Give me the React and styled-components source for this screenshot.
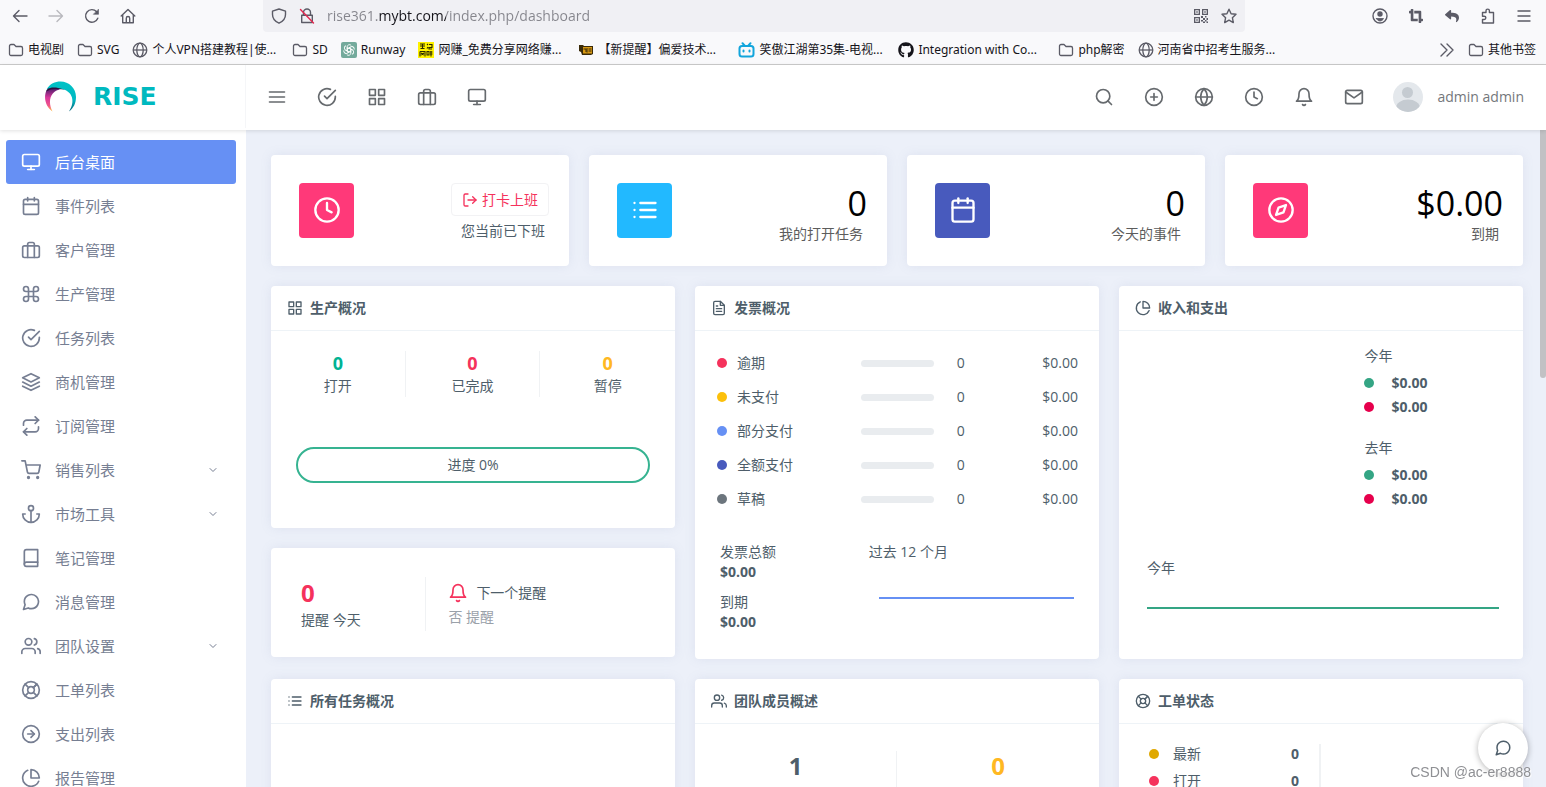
import React from "react";
import styled, { createGlobalStyle } from "styled-components";
import {
  FiAnchor,
  FiArrowRightCircle,
  FiBell,
  FiBook,
  FiBriefcase,
  FiCalendar,
  FiCheckCircle,
  FiChevronDown,
  FiClock,
  FiCommand,
  FiCompass,
  FiFileText,
  FiGlobe,
  FiGrid,
  FiLayers,
  FiLifeBuoy,
  FiList,
  FiLogOut,
  FiMail,
  FiMenu,
  FiMessageCircle,
  FiMonitor,
  FiPieChart,
  FiPlusCircle,
  FiRepeat,
  FiSearch,
  FiShoppingCart,
  FiUsers,
} from "react-icons/fi";
import { FaCropAlt, FaGithub, FaReply } from "react-icons/fa";

const GlobalStyle = createGlobalStyle`
  * {
    box-sizing: border-box;
  }

  body {
    margin: 0;
    color: #4e5e6a;
    background: #ecf0f9;
    font-family: "Open Sans", "Noto Sans CJK SC", sans-serif;
    font-size: 14px;
    line-height: 20px;
  }

  a {
    color: inherit;
    text-decoration: none;
  }

  button {
    padding: 0;
    border: none;
    background: none;
    color: inherit;
    font: inherit;
    cursor: pointer;
  }

  svg {
    display: block;
    flex-shrink: 0;
  }

  ul {
    margin: 0;
    padding: 0;
    list-style: none;
  }
`;

/* ---------- browser bars ---------- */

const Page = styled.div`
  display: flex;
  flex-direction: column;
  height: 100vh;
  overflow: hidden;
`;

const Browser = styled.div`
  flex-shrink: 0;
  background: #f9f9fb;
  border-bottom: 1px solid #cccccc;
  color: #15141a;
  font-family: "Noto Sans", "Noto Sans CJK SC", sans-serif;
`;

const Toolbar = styled.div`
  display: flex;
  align-items: center;
  height: 32px;
  padding: 0 4px 0 2px;
`;

const ToolButton = styled.button`
  display: flex;
  justify-content: center;
  width: 36px;
  color: ${({ $dim }) => ($dim ? "#b9b9be" : "#5b5b66")};
`;

const AddressBar = styled.div`
  display: flex;
  align-items: center;
  flex: 1;
  gap: 12px;
  height: 32px;
  margin: 0 117px;
  padding: 0 8px;
  border-radius: 0 0 4px 4px;
  background: #f0f0f4;
  color: #5b5b66;
`;

const AddressInput = styled.input`
  flex: 1;
  min-width: 0;
  padding: 0;
  border: none;
  outline: none;
  font-family: "Open Sans", sans-serif;
  font-size: 14px;
  line-height: 20px;
  color: transparent;
  background: linear-gradient(
    to right,
    #85858c 52px,
    #15141a 52px,
    #15141a 119px,
    #85858c 119px
  );
  -webkit-background-clip: text;
  background-clip: text;
`;

const Bookmarks = styled.nav`
  display: flex;
  gap: 13px;
  height: 32px;
  padding: 4px 10px 0 8px;
  font-size: 12px;
`;

const Bookmark = styled.a`
  display: flex;
  align-items: center;
  gap: 4px;
  width: ${({ $long }) => ($long ? "147px" : "auto")};
  white-space: nowrap;
`;

const MoreBookmarks = styled.button`
  margin-left: auto;
  color: #5b5b66;
`;

/* ---------- app header ---------- */

const Header = styled.header`
  position: relative;
  z-index: 2;
  display: flex;
  align-items: center;
  flex-shrink: 0;
  height: 65px;
  padding: 0 22px 2px 0;
  background: #ffffff;
  box-shadow: 0 1px 4px rgba(0, 0, 0, 0.12);
`;

const Brand = styled.a`
  display: flex;
  align-items: center;
  gap: 15px;
  width: 246px;
  height: 63px;
  padding-left: 44px;
  border-right: 1px solid #f5f6f8;
  color: #00b9bf;
  font-family: "DejaVu Sans", sans-serif;
  font-size: 25px;
  font-weight: 700;
`;

const HeaderIcons = styled.div`
  display: flex;
  margin: ${({ $right }) => ($right ? "0 14px 0 auto" : "0 0 0 6px")};
`;

const HeaderButton = styled.button`
  display: flex;
  justify-content: center;
  width: 50px;
  color: #666a6e;
`;

const User = styled.a`
  display: flex;
  align-items: center;
  gap: 15px;
  color: #74777b;
  font-size: 14px;
`;

/* ---------- layout ---------- */

const Body = styled.div`
  display: flex;
  flex: 1;
  min-height: 0;
`;

const Sidebar = styled.nav`
  flex-shrink: 0;
  width: 246px;
  padding: 10px 10px 0 6px;
  overflow: hidden;
  background: #ffffff;
`;

const SideLink = styled.a`
  display: flex;
  align-items: center;
  gap: 14px;
  height: 44px;
  padding: 0 17px 0 15px;
  border-radius: 3px;
  color: ${({ $active }) => ($active ? "#ffffff" : "#767e92")};
  background: ${({ $active }) => ($active ? "#6690f4" : "transparent")};
  font-size: 15px;

  span {
    flex: 1;
  }
`;

const Content = styled.main`
  display: flex;
  flex-direction: column;
  flex: 1;
  gap: 20px;
  min-width: 0;
  padding: 25px 17px 0 25px;
  overflow: hidden;
`;

const ScrollTrack = styled.div`
  flex-shrink: 0;
  width: 6px;
`;

const ScrollThumb = styled.div`
  height: 248px;
  border-radius: 0 0 3px 3px;
  background: #c1c1c4;
`;

const Row = styled.div`
  display: grid;
  grid-template-columns: repeat(${({ $cols }) => $cols}, 1fr);
  flex-shrink: 0;
  gap: 20px;
`;

const Column = styled.div`
  display: flex;
  flex-direction: column;
  gap: 20px;
`;

const Card = styled.section`
  min-height: ${({ $tall }) => ($tall ? "240px" : "0")};
  border-radius: 4px;
  background: #ffffff;
  box-shadow: 0 0 12px rgba(120, 130, 170, 0.12);
`;

const CardTitle = styled.h2`
  display: flex;
  align-items: center;
  gap: 7px;
  height: 45px;
  margin: 0;
  padding: 0 16px;
  border-bottom: 1px solid #eef3f7;
  font-size: 14px;
  font-weight: 700;
`;

const StatCard = styled(Card)`
  display: flex;
  justify-content: space-between;
  padding: 28px 20px 20px 28px;
`;

const StatIcon = styled.div`
  display: flex;
  align-items: center;
  justify-content: center;
  width: 55px;
  height: 55px;
  padding-bottom: 2px;
  border-radius: 4px;
  background: ${({ $color }) => $color};
  color: #ffffff;
`;

const StatText = styled.div`
  display: flex;
  flex-direction: column;
  align-items: flex-end;
`;

const StatValue = styled.div`
  color: #000000;
  font-size: 34px;
  line-height: 40px;
`;

const StatLabel = styled.div`
  padding-right: 4px;
  color: ${({ $clock }) => ($clock ? "#4e5e6a" : "#5c5c5c")};
  line-height: ${({ $clock }) => ($clock ? "30px" : "22px")};
`;

const ClockButton = styled.button`
  display: flex;
  align-items: center;
  gap: 4px;
  height: 33px;
  padding: 0 10px;
  border: 1px solid #f2f2f4;
  border-radius: 4px;
  color: #f5325c;
`;

/* ---------- projects ---------- */

const Counts = styled.div`
  display: grid;
  grid-template-columns: repeat(3, 1fr);
  padding-top: 20px;
`;

const Count = styled.div`
  border-right: 1px solid #f0f2f4;
  text-align: center;
  line-height: 22px;

  &:last-child {
    border-right: none;
  }

  strong {
    display: block;
    color: ${({ $color }) => $color};
    font-size: 18px;
    line-height: 24px;
  }
`;

const Progress = styled.div`
  margin: 50px 25px 45px;
  border: 2px solid #36b391;
  border-radius: 18px;
  text-align: center;
  line-height: 32px;
`;

const Reminder = styled(Card)`
  display: grid;
  grid-template-columns: 5fr 8fr;
  padding: 29px 0 26px;
`;

const ReminderCount = styled.div`
  padding-left: 30px;
  border-right: 1px solid #f0f2f4;
  line-height: 22px;

  strong {
    display: block;
    color: #f5325c;
    font-size: 24px;
    line-height: 32px;
  }
`;

const ReminderNext = styled.div`
  padding: 4px 0 0 22px;
  line-height: 24px;

  div {
    display: flex;
    align-items: center;
    gap: 8px;
  }

  small {
    display: block;
    color: #9aa1a9;
    font-size: 14px;
  }

  svg {
    color: #f5325c;
  }
`;

/* ---------- invoices ---------- */

const Dot = styled.i`
  display: inline-block;
  flex-shrink: 0;
  width: 10px;
  height: 10px;
  border-radius: 50%;
  background: ${({ $color }) => $color};
`;

const InvoiceBody = styled.div`
  padding: 15px 21px 0 22px;
`;

const InvoiceTable = styled.table`
  width: 100%;
  border-collapse: collapse;
  table-layout: fixed;

  td {
    height: 34px;
    padding: 0;
    text-align: center;
  }

  td:first-child {
    width: 40%;
    text-align: left;
  }

  td:nth-child(2) {
    width: 20%;
  }

  td:nth-child(3) {
    width: 15%;
  }

  td:last-child {
    text-align: right;
  }
`;

const Named = styled.span`
  display: flex;
  align-items: center;
  gap: 10px;
`;

const Track = styled.div`
  height: 7px;
  border-radius: 4px;
  background: #e9ecef;
`;

const InvoiceTotals = styled.div`
  display: grid;
  grid-template-columns: 42% 58%;
  padding: 26px 25px 26px;
`;

const Totals = styled.div`
  display: flex;
  flex-direction: column;
  gap: 10px;

  strong {
    display: block;
  }
`;

const Spark = styled.svg`
  width: 100%;
  height: ${({ $height }) => $height};
  padding-left: ${({ $indent }) => $indent || "0"};
`;

/* ---------- income, team, tickets ---------- */

const Years = styled.div`
  display: grid;
  grid-template-columns: 3fr 2fr;
  padding-top: 13px;
  line-height: 24px;
`;

const YearList = styled.div`
  display: flex;
  flex-direction: column;
  grid-column: 2;
  gap: 17px;
  padding-left: 3px;
`;

const YearRows = styled.ul`
  padding-top: 3px;

  li {
    display: flex;
    align-items: center;
    gap: 17px;
    font-weight: 700;
  }
`;

const ThisYear = styled.div`
  padding: 45px 24px 39px 28px;
  line-height: 24px;
`;

const Team = styled.div`
  display: grid;
  grid-template-columns: repeat(2, 1fr);
  padding-top: 27px;
`;

const TeamCount = styled.strong`
  height: 120px;
  border-right: ${({ $split }) => ($split ? "1px solid #f0f2f4" : "none")};
  color: ${({ $color }) => $color};
  font-size: 24px;
  line-height: 30px;
  text-align: center;
`;

const Tickets = styled.ul`
  display: flex;
  flex-direction: column;
  gap: 7px;
  width: 50%;
  height: 140px;
  margin-top: 20px;
  padding: 0 20px 0 30px;
  border-right: 2px solid #f0f2f4;

  li {
    display: flex;
    align-items: center;
    gap: 14px;
  }

  strong {
    margin-left: auto;
  }
`;

const ChatButton = styled.button`
  position: fixed;
  right: 18px;
  bottom: 14px;
  display: flex;
  align-items: center;
  justify-content: center;
  width: 50px;
  height: 50px;
  border-radius: 50%;
  background: #ffffff;
  box-shadow: 0 1px 6px rgba(0, 0, 0, 0.3);
`;

const Watermark = styled.div`
  position: fixed;
  right: 15px;
  bottom: 5px;
  z-index: 3;
  color: #8f9094;
  font-family: "Liberation Sans", sans-serif;
  font-size: 14px;
  text-shadow: 1px 1px 1px #ffffff;
`;

/* ---------- drawings ---------- */

const Line = ({ size = 16, width = 1.4, children }) => (
  <svg
    width={size}
    height={size}
    viewBox="0 0 16 16"
    fill="none"
    stroke="currentColor"
    strokeWidth={width}
    strokeLinecap="round"
    strokeLinejoin="round"
  >
    {children}
  </svg>
);

const BackIcon = () => (
  <Line>
    <path d="M15 8H1.5M7 2.5L1.5 8L7 13.5" />
  </Line>
);

const ForwardIcon = () => (
  <Line>
    <path d="M1 8H14.500M9 2.5L14.500 8L9 13.500" />
  </Line>
);

const ReloadIcon = () => (
  <Line>
    <path d="M13.800 10.200A6.300 6.300 0 1 1 12.600 3.700" />
    <path d="M14.500 1.500V6.300H9.700Z" fill="currentColor" strokeWidth="0.6" />
  </Line>
);

const HomeIcon = () => (
  <Line>
    <path d="M1.200 8L8 1.500L14.800 8M2.700 7V14.800H13.300V7M6.300 14.500V10.200A1.700 1.700 0 0 1 9.700 10.200V14.500" />
  </Line>
);

const ShieldIcon = () => (
  <Line>
    <path d="M8 1L14.500 3.200V6.500C14.500 10.500 11.500 13.700 8 15.200C4.500 13.700 1.500 10.500 1.500 6.500V3.200Z" />
  </Line>
);

const InsecureIcon = () => (
  <Line>
    <path d="M4.500 7V4.500A3.500 3.500 0 0 1 11.500 4.500V7M2.700 7.200H13.300V14.500H2.700Z" />
    <path d="M1.500 1.500L14.500 15" stroke="#e22850" />
  </Line>
);

const QrIcon = () => (
  <svg width="16" height="16" viewBox="0 0 16 16" fill="#5b5b66" fillRule="evenodd">
    <path d="M1 1H7V7H1ZM2.300 2.300V5.700H5.700V2.300ZM3.300 3.300H4.700V4.700H3.300ZM9 1H15V7H9ZM10.300 2.300V5.700H13.700V2.300ZM11.300 3.300H12.700V4.700H11.300ZM1 9H7V15H1ZM2.300 10.300V13.700H5.700V10.300ZM3.300 11.300H4.700V12.700H3.300Z" />
    <path d="M8 8H10V10H8ZM12 8H13.500V9.500H12ZM10 10H12V12H10ZM13.500 10H15V12H13.500ZM8 12H10V13.500H8ZM12 12H13.500V13.500H12ZM10 13.500H12V15H10ZM13.500 13.500H15V15H13.500Z" />
  </svg>
);

const StarIcon = () => (
  <Line>
    <path d="M8 1.200L10.100 5.700L15 6.300L11.400 9.700L12.300 14.600L8 12.200L3.700 14.600L4.600 9.700L1 6.300L5.900 5.700Z" />
  </Line>
);

const AccountIcon = () => (
  <Line>
    <circle cx="8" cy="8" r="7" />
    <circle cx="8" cy="6" r="2" fill="currentColor" />
    <path d="M4.500 10.500H11.500C11 12 9.500 13 8 13S5 12 4.500 10.500Z" fill="currentColor" strokeWidth="0.8" />
  </Line>
);

const PuzzleIcon = () => (
  <Line>
    <path d="M2.500 4.500H6V2.800A1.700 1.700 0 0 1 9.400 2.800V4.500H13.500V15H2.500V11.500H4.200A1.600 1.600 0 0 0 4.200 8.200H2.500Z" />
  </Line>
);

const MenuIcon = () => (
  <Line>
    <path d="M2 3H14M2 8H14M2 13H14" />
  </Line>
);

const FolderIcon = () => (
  <svg width="16" height="16" viewBox="0 0 16 16" fill="none" stroke="#5b5b66" strokeWidth="1.3" strokeLinejoin="round">
    <path d="M1.500 4A1.500 1.500 0 0 1 3 2.500H6L8 4.500H13A1.500 1.500 0 0 1 14.500 6V12A1.500 1.500 0 0 1 13 13.500H3A1.500 1.500 0 0 1 1.500 12Z" />
  </svg>
);

const SiteIcon = () => (
  <svg width="16" height="16" viewBox="0 0 16 16" fill="none" stroke="#5b5b66" strokeWidth="1.3">
    <circle cx="8" cy="8" r="6.800" />
    <ellipse cx="8" cy="8" rx="3.200" ry="6.800" />
    <path d="M1.500 8H14.500" />
  </svg>
);

const GptIcon = () => (
  <svg width="16" height="16" viewBox="0 0 16 16" fill="none">
    <rect width="16" height="16" rx="2" fill="#74aa9c" />
    <g stroke="#ffffff" strokeWidth="0.9">
      {[0, 60, 120, 180, 240, 300].map((deg) => (
        <path
          key={deg}
          transform={`rotate(${deg} 8 8)`}
          d="M6.200 9V4.800A2.300 2.300 0 0 1 10.200 3.400M6.200 7L9.500 5.100"
        />
      ))}
    </g>
  </svg>
);

const YellowIcon = () => (
  <svg width="16" height="16" viewBox="0 0 16 16">
    <rect width="16" height="16" fill="#fff200" />
    <path
      d="M2 2H7M2 4H7M2.500 6.500H6.500M4.500 1.500V7M9 2L10 3M9 6.500L10 5M11 2.500H14V5.500H11V7H14M2 9.500H7V14.500M2 9.500V14.500M3 11L6 13M6 11L3 13M9 9.500H11V13H9ZM12 10H14.500M12 12H14.500M13 9V14.500"
      fill="none"
      stroke="#2b2900"
      strokeWidth="1.100"
    />
  </svg>
);

const ForumIcon = () => (
  <svg width="16" height="16" viewBox="0 0 16 16">
    <path d="M1 3H5L6 4H15V12L13 13H4L3 10L1 9Z" fill="#3a2a08" />
    <path d="M5 5H14V11.500H5Z" fill="#d99a13" />
    <path d="M2 5H5M5.500 7H8V10M9 6V10.500M10.500 7H13.500M10.500 9H13.500" stroke="#3a2a08" fill="none" />
  </svg>
);

const TvIcon = () => (
  <svg width="17" height="16" viewBox="0 0 17 16" fill="none" stroke="#12a5dc" strokeWidth="2" strokeLinecap="round">
    <rect x="1.500" y="4" width="14" height="10.500" rx="2.500" />
    <path d="M4.500 1.200L6.500 3.500M12.500 1.200L10.500 3.500M5.500 8.500V9.500M11.500 8.500V9.500" />
  </svg>
);

const LogoMark = () => (
  <svg width="34" height="34" viewBox="0 0 34 34">
    <defs>
      <linearGradient id="rise-left" x1="0" y1="0" x2="0" y2="1">
        <stop offset="0" stopColor="#4b1d6b" />
        <stop offset="0.4" stopColor="#d8379b" />
        <stop offset="0.75" stopColor="#f0568a" />
        <stop offset="1" stopColor="#ffc445" />
      </linearGradient>
      <linearGradient id="rise-right" x1="0" y1="0" x2="0" y2="1">
        <stop offset="0" stopColor="#00c2c6" />
        <stop offset="0.6" stopColor="#00b9c2" />
        <stop offset="1" stopColor="#08647a" />
      </linearGradient>
    </defs>
    <path d="M8.500 31.500C1 26 -0.500 17 2.500 10.500C7 7.500 12 8 16 9.500C8 10.500 2.500 20 8.500 31.500Z" fill="url(#rise-left)" />
    <path d="M2 11.500C4.500 6 9 4 14 5L21 9.500C14 8.500 6 8.500 2 11.500Z" fill="#2a0f3d" />
    <path d="M2.500 9.500C6 3.500 11 1.500 16.500 1.500C25 1.500 32 8 32 17C32 23.500 29.500 28 25 31.500C31.500 21.500 28.500 12 19 9.300C12 7 7 7 2.500 9.500Z" fill="url(#rise-right)" />
  </svg>
);

const Avatar = () => (
  <svg width="30" height="30" viewBox="0 0 30 30">
    <defs>
      <clipPath id="avatar-clip">
        <circle cx="15" cy="15" r="15" />
      </clipPath>
    </defs>
    <g clipPath="url(#avatar-clip)">
      <rect width="30" height="30" fill="#e4e8ec" />
      <circle cx="14.500" cy="10.500" r="5.500" fill="#c5cbd1" />
      <ellipse cx="15" cy="26" rx="12" ry="8.500" fill="#c5cbd1" />
    </g>
  </svg>
);

const MoreIcon = () => (
  <Line>
    <path d="M2 2L8 8L2 14M8 2L14 8L8 14" />
  </Line>
);

/* ---------- data ---------- */

const bookmarks = [
  { icon: FolderIcon, text: "电视剧" },
  { icon: FolderIcon, text: "SVG" },
  { icon: SiteIcon, text: "个人VPN搭建教程|使...", long: true },
  { icon: FolderIcon, text: "SD" },
  { icon: GptIcon, text: "Runway" },
  { icon: YellowIcon, text: "网赚_免费分享网络赚...", long: true },
  { icon: ForumIcon, text: "【新提醒】偏爱技术...", long: true },
  { icon: TvIcon, text: "笑傲江湖第35集-电视...", long: true },
  { icon: FaGithub, text: "Integration with Co...", long: true },
  { icon: FolderIcon, text: "php解密" },
  { icon: SiteIcon, text: "河南省中招考生服务...", long: true },
];

const menu = [
  { icon: FiMonitor, text: "后台桌面", active: true },
  { icon: FiCalendar, text: "事件列表" },
  { icon: FiBriefcase, text: "客户管理" },
  { icon: FiCommand, text: "生产管理" },
  { icon: FiCheckCircle, text: "任务列表" },
  { icon: FiLayers, text: "商机管理" },
  { icon: FiRepeat, text: "订阅管理" },
  { icon: FiShoppingCart, text: "销售列表", more: true },
  { icon: FiAnchor, text: "市场工具", more: true },
  { icon: FiBook, text: "笔记管理" },
  { icon: FiMessageCircle, text: "消息管理" },
  { icon: FiUsers, text: "团队设置", more: true },
  { icon: FiLifeBuoy, text: "工单列表" },
  { icon: FiArrowRightCircle, text: "支出列表" },
  { icon: FiPieChart, text: "报告管理" },
];

const leftIcons = [
  ["菜单", FiMenu],
  ["任务", FiCheckCircle],
  ["项目", FiGrid],
  ["客户", FiBriefcase],
  ["桌面", FiMonitor],
];

const rightIcons = [
  ["搜索", FiSearch],
  ["添加", FiPlusCircle],
  ["语言", FiGlobe],
  ["时间", FiClock],
  ["通知", FiBell],
  ["消息", FiMail],
];

const stats = [
  { icon: FiList, color: "#22b9ff", value: "0", label: "我的打开任务" },
  { icon: FiCalendar, color: "#485abd", value: "0", label: "今天的事件" },
  { icon: FiCompass, color: "#ff3979", value: "$0.00", label: "到期" },
];

const invoices = [
  ["#f5325c", "逾期"],
  ["#fcc00b", "未支付"],
  ["#6690f4", "部分支付"],
  ["#485abd", "全额支付"],
  ["#6c757d", "草稿"],
];

const BrowserBars = () => (
  <Browser>
    <Toolbar>
      <ToolButton aria-label="后退"><BackIcon /></ToolButton>
      <ToolButton aria-label="前进" $dim><ForwardIcon /></ToolButton>
      <ToolButton aria-label="刷新"><ReloadIcon /></ToolButton>
      <ToolButton aria-label="主页"><HomeIcon /></ToolButton>
      <AddressBar>
        <ShieldIcon />
        <InsecureIcon />
        <AddressInput
          type="text"
          aria-label="地址"
          defaultValue="rise361.mybt.com/index.php/dashboard"
        />
        <QrIcon />
        <StarIcon />
      </AddressBar>
      <ToolButton aria-label="账户"><AccountIcon /></ToolButton>
      <ToolButton aria-label="截图"><FaCropAlt size={14} /></ToolButton>
      <ToolButton aria-label="撤销"><FaReply size={14} /></ToolButton>
      <ToolButton aria-label="扩展"><PuzzleIcon /></ToolButton>
      <ToolButton aria-label="菜单"><MenuIcon /></ToolButton>
    </Toolbar>
    <Bookmarks>
      {bookmarks.map(({ icon: Icon, text, long }) => (
        <Bookmark href="#" key={text} $long={long}>
          <Icon size={16} />
          {text}
        </Bookmark>
      ))}
      <MoreBookmarks aria-label="更多书签"><MoreIcon /></MoreBookmarks>
      <Bookmark href="#">
        <FolderIcon />
        其他书签
      </Bookmark>
    </Bookmarks>
  </Browser>
);

const IconButtons = ({ items, right }) => (
  <HeaderIcons $right={right}>
    {items.map(([label, Icon]) => (
      <HeaderButton key={label} aria-label={label}>
        <Icon size={20} />
      </HeaderButton>
    ))}
  </HeaderIcons>
);

const YearSummary = ({ title }) => (
  <div>
    {title}
    <YearRows>
      <li><Dot $color="#34a584" />$0.00</li>
      <li><Dot $color="#e6004c" />$0.00</li>
    </YearRows>
  </div>
);

const App = () => (
  <Page>
    <GlobalStyle />
    <BrowserBars />
    <Header>
      <Brand href="#">
        <LogoMark />
        RISE
      </Brand>
      <IconButtons items={leftIcons} />
      <IconButtons items={rightIcons} right />
      <User href="#">
        <Avatar />
        admin admin
      </User>
    </Header>
    <Body>
      <Sidebar>
        {menu.map(({ icon: Icon, text, active, more }) => (
          <SideLink href="#" key={text} $active={active}>
            <Icon size={20} />
            <span>{text}</span>
            {more && <FiChevronDown size={12} />}
          </SideLink>
        ))}
      </Sidebar>
      <Content>
        <Row $cols={4}>
          <StatCard>
            <StatIcon $color="#ff3979"><FiClock size={28} /></StatIcon>
            <StatText>
              <ClockButton>
                <FiLogOut size={16} />
                打卡上班
              </ClockButton>
              <StatLabel $clock>您当前已下班</StatLabel>
            </StatText>
          </StatCard>
          {stats.map(({ icon: Icon, color, value, label }) => (
            <StatCard key={label}>
              <StatIcon $color={color}><Icon size={28} /></StatIcon>
              <StatText>
                <StatValue>{value}</StatValue>
                <StatLabel>{label}</StatLabel>
              </StatText>
            </StatCard>
          ))}
        </Row>

        <Row $cols={3}>
          <Column>
            <Card>
              <CardTitle><FiGrid size={16} />生产概况</CardTitle>
              <Counts>
                <Count $color="#00b393"><strong>0</strong>打开</Count>
                <Count $color="#f5325c"><strong>0</strong>已完成</Count>
                <Count $color="#ffb822"><strong>0</strong>暂停</Count>
              </Counts>
              <Progress>进度 0%</Progress>
            </Card>
            <Reminder>
              <ReminderCount><strong>0</strong>提醒 今天</ReminderCount>
              <ReminderNext>
                <div><FiBell size={20} />下一个提醒</div>
                <small>否 提醒</small>
              </ReminderNext>
            </Reminder>
          </Column>

          <Card>
            <CardTitle><FiFileText size={16} />发票概况</CardTitle>
            <InvoiceBody>
              <InvoiceTable>
                <tbody>
                  {invoices.map(([color, name]) => (
                    <tr key={name}>
                      <td><Named><Dot $color={color} />{name}</Named></td>
                      <td><Track /></td>
                      <td>0</td>
                      <td>$0.00</td>
                    </tr>
                  ))}
                </tbody>
              </InvoiceTable>
            </InvoiceBody>
            <InvoiceTotals>
              <Totals>
                <div>发票总额<strong>$0.00</strong></div>
                <div>到期<strong>$0.00</strong></div>
              </Totals>
              <div>
                过去 12 个月
                <Spark $height="60px" $indent="10px">
                  <line x1="0" x2="100%" y1="36" y2="36" stroke="#6690f4" strokeWidth="2" />
                </Spark>
              </div>
            </InvoiceTotals>
          </Card>

          <Card>
            <CardTitle><FiPieChart size={16} />收入和支出</CardTitle>
            <Years>
              <YearList>
                <YearSummary title="今年" />
                <YearSummary title="去年" />
              </YearList>
            </Years>
            <ThisYear>
              今年
              <Spark $height="40px">
                <line x1="0" x2="100%" y1="28" y2="28" stroke="#34a584" strokeWidth="2" />
              </Spark>
            </ThisYear>
          </Card>
        </Row>

        <Row $cols={3}>
          <Card $tall>
            <CardTitle><FiList size={16} />所有任务概况</CardTitle>
          </Card>
          <Card $tall>
            <CardTitle><FiUsers size={16} />团队成员概述</CardTitle>
            <Team>
              <TeamCount $color="#4e5e6a" $split>1</TeamCount>
              <TeamCount $color="#ffb822">0</TeamCount>
            </Team>
          </Card>
          <Card $tall>
            <CardTitle><FiLifeBuoy size={16} />工单状态</CardTitle>
            <Tickets>
              <li><Dot $color="#e0a800" />最新<strong>0</strong></li>
              <li><Dot $color="#f5325c" />打开<strong>0</strong></li>
            </Tickets>
          </Card>
        </Row>
      </Content>
      <ScrollTrack>
        <ScrollThumb />
      </ScrollTrack>
    </Body>
    <ChatButton aria-label="聊天"><FiMessageCircle size={18} /></ChatButton>
    <Watermark>CSDN @ac-er8888</Watermark>
  </Page>
);

export default App;
